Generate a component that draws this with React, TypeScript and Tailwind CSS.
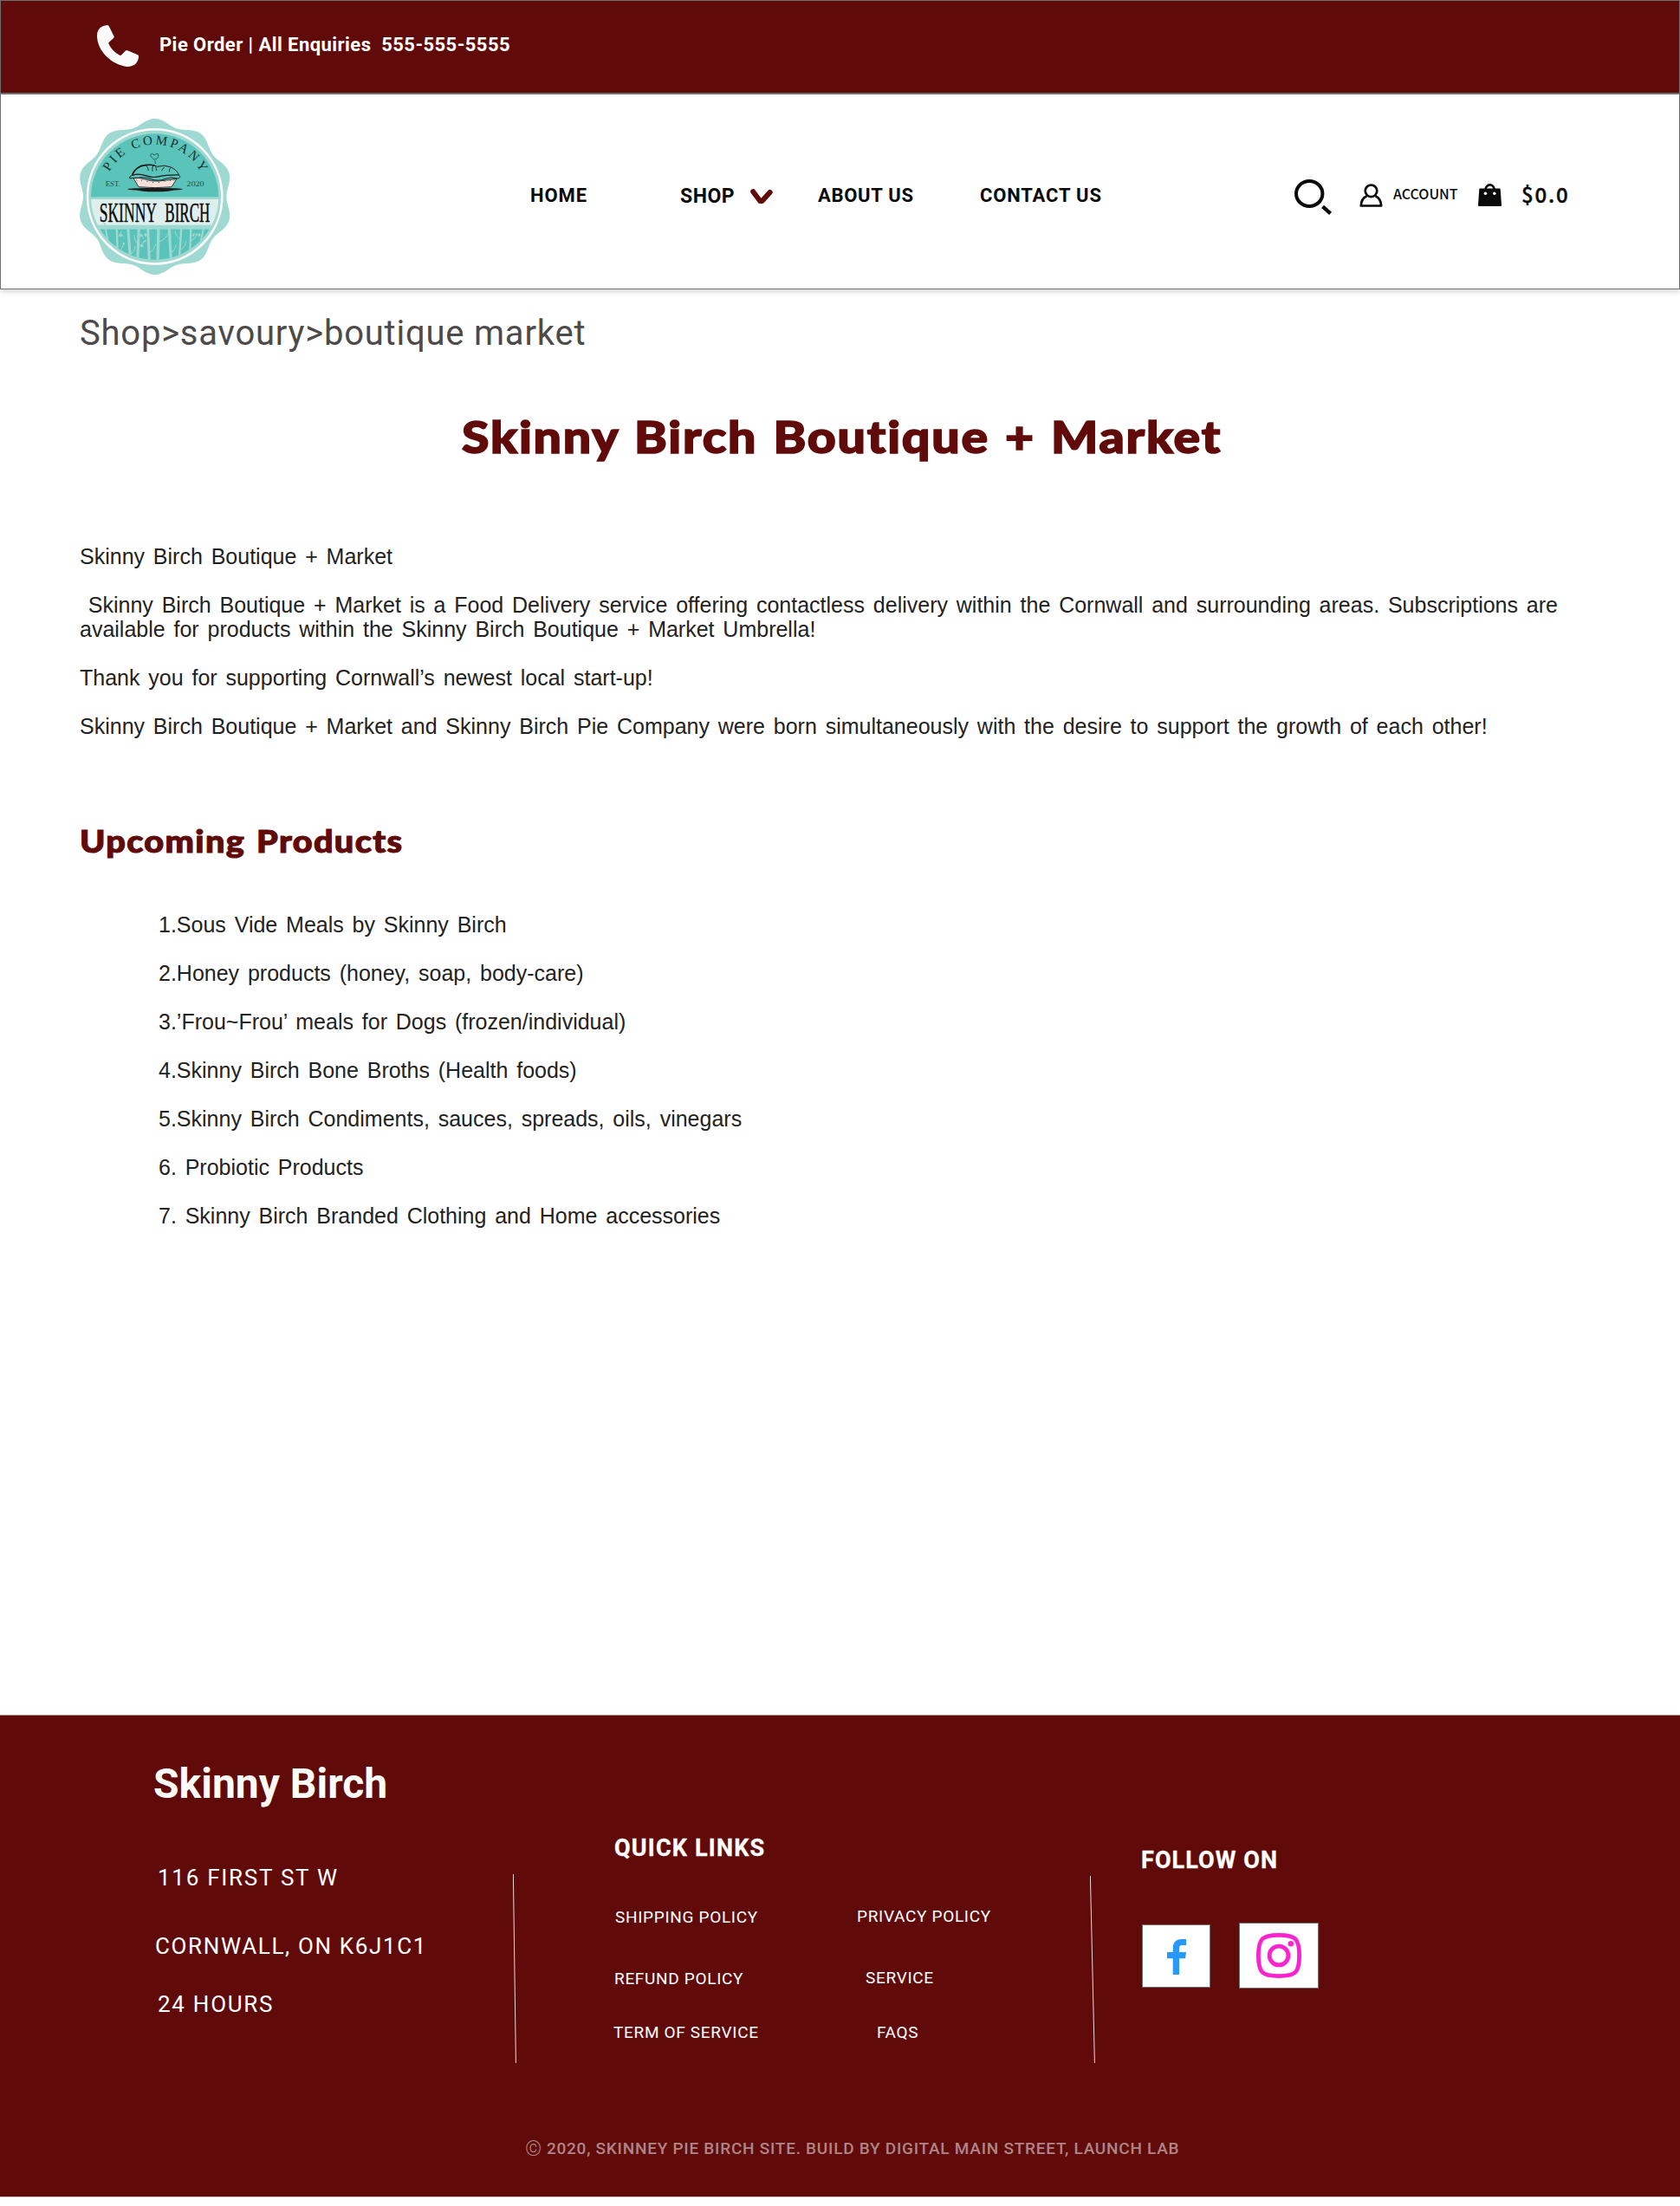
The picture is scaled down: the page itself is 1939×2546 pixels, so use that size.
import React from "react";

const scallop = (() => {
  const pts: string[] = [];
  for (let i = 0; i < 360; i++) {
    const a = (i * Math.PI) / 180;
    const r = 259 + 11 * Math.cos(10 * a);
    pts.push(`${(296 + r * Math.sin(a)).toFixed(1)},${(306 - r * Math.cos(a)).toFixed(1)}`);
  }
  return pts.join(" ");
})();

const trunks = [
  [122, 400, 148, 530, 6],
  [164, 410, 168, 530, 7],
  [203, 410, 212, 530, 9],
  [241, 410, 236, 530, 9],
  [272, 410, 277, 530, 9],
  [309, 410, 306, 530, 10],
  [346, 410, 352, 530, 9],
  [388, 410, 380, 530, 7],
  [421, 410, 417, 530, 7],
  [466, 410, 440, 530, 6],
];

function Logo() {
  return (
    <svg viewBox="36 36 519 540" className="h-[180px] w-[173px] font-['Liberation_Serif'] font-normal" aria-label="Skinny Birch Pie Company">
      <defs>
        <clipPath id="disc">
          <ellipse cx="296" cy="306" rx="221" ry="218" />
        </clipPath>
        <path id="arc" d="M 139 220 A 179 179 0 0 1 464 240" />
      </defs>
      <polygon points={scallop} fill="#a0d9d2" />
      <circle cx="296" cy="305.5" r="233" fill="none" stroke="#fff" strokeWidth="7.5" />
      <g clipPath="url(#disc)">
        <rect x="70" y="80" width="452" height="227" fill="#5ac4bb" />
        <rect x="70" y="315" width="452" height="89" fill="#dfefee" />
        <rect x="70" y="419" width="452" height="110" fill="#5ac4bb" />
        <g stroke="#a0d9d2" fill="none" strokeLinecap="round">
          {trunks.map(([x1, y1, x2, y2, w], i) => (
            <line key={i} x1={x1} y1={y1} x2={x2} y2={y2} strokeWidth={w} />
          ))}
          <g strokeWidth="3">
            <path d="M166 445q10-4 14-18M180 436l8 8M239 470q-14-6-14-30M242 478q14-8 22-22M256 462l10-2M256 450l-6-14M212 505q14-8 16-26" />
            <path d="M309 462q26-6 36-34M279 500q16-12 20-28M388 455q-18-8-22-28M386 488q16-8 18-26M421 460q16-8 22-26M443 438l-14-4M354 500q14-12 16-28M140 480l-14-12M170 496q14-8 18-26" />
          </g>
          <g fill="#a0d9d2" stroke="none">
            <circle cx="178" cy="440" r="5" />
            <circle cx="248" cy="440" r="5" />
            <circle cx="264" cy="438" r="5" />
            <circle cx="251" cy="476" r="5" />
            <circle cx="450" cy="438" r="5" />
            <circle cx="429" cy="440" r="4" />
            <circle cx="188" cy="468" r="4" />
          </g>
        </g>
      </g>
      <text fontSize="45" fill="#16302e" letterSpacing="8.8">
        <textPath href="#arc">PIE COMPANY</textPath>
      </text>
      <text x="125" y="270" fontSize="26" fill="#1f4f4b" textLength="52" lengthAdjust="spacingAndGlyphs">EST.</text>
      <text x="406" y="270" fontSize="26" fill="#1f4f4b" textLength="61" lengthAdjust="spacingAndGlyphs">2020</text>
      <text x="104" y="392" fontSize="97" fill="#0b0b0b" stroke="#0b0b0b" strokeWidth="1.500" textLength="199" lengthAdjust="spacingAndGlyphs">SKINNY</text>
      <text x="331" y="392" fontSize="97" fill="#0b0b0b" stroke="#0b0b0b" strokeWidth="1.500" textLength="156" lengthAdjust="spacingAndGlyphs">BIRCH</text>
      <path d="M298 192q2-12-9-19-10-7-8-13 4-7 14 2 8-8 13-3 4 8-6 16-5 2-6-2" fill="none" stroke="#1d4a47" strokeWidth="2.6" />
      <ellipse cx="297" cy="280" rx="96" ry="4.5" fill="#1b1b1b" />
      <ellipse cx="298" cy="282" rx="62" ry="7" fill="#1b1b1b" />
      <path d="M222 242Q240 238 262 246T310 252T372 244L354 272Q298 278 240 272Z" fill="#f7e0da" stroke="#1b1b1b" strokeWidth="2.5" />
      <path d="M209 243Q206 235 218 232Q226 206 256 198Q290 192 304 202Q330 194 352 204Q374 214 380 232Q388 240 376 243Q350 236 330 245T282 245T238 241Q222 240 209 243Z" fill="#5ac4bb" stroke="#1b1b1b" strokeWidth="3" />
      <path d="M218 232Q240 224 264 233T312 236T380 231" fill="none" stroke="#1b1b1b" strokeWidth="3.5" />
      <path d="M218 230Q232 200 262 197Q280 194 296 198" fill="none" stroke="#1b1b1b" strokeWidth="5" />
      <path d="M266 198q8 8 8 18M290 198q-4 8-2 20M298 202q4 6 4 14M330 204q-8 4-10 12M350 206q-4 6-4 14" fill="none" stroke="#1b1b1b" strokeWidth="2.5" />
      <path d="M232 247l3 3M250 248l1 3M270 252v3M290 255v3M310 255v3M330 251v3M350 248l-1 3M364 247l-2 3" stroke="#1b1b1b" strokeWidth="2.5" />
    </svg>
  );
}

function PhoneIcon() {
  return (
    <svg viewBox="0 0 48 48" className="h-12 w-12" fill="#fafafa">
      <path d="M6 1.5Q9 0 12.2 0Q13.3.2 13.8 1.2L19.6 13Q20 14.2 19 15L13.6 20Q13 20.8 13.4 21.6C16 27 20 31.5 26 34.8Q27.2 35.3 28 34.6L33 29.6Q34 28.8 35.2 29.3L47 34.3Q48 34.9 48 36C48 43 43 48 35 48C17 46 0 30 0 12C0 7 2 3.5 6 1.5Z" />
    </svg>
  );
}

function SearchIcon() {
  return (
    <svg viewBox="0 0 44 42" className="h-[42px] w-11" fill="none" stroke="#0a0a0a" strokeWidth="4">
      <ellipse cx="17.2" cy="16.5" rx="15.2" ry="14.5" />
      <path d="M32.6 31.3L41.6 39.3" strokeWidth="4.4" />
    </svg>
  );
}

function UserIcon() {
  return (
    <svg viewBox="0 0 27 27" className="h-[27px] w-[27px]" fill="none" stroke="#0a0a0a" strokeWidth="2.7">
      <circle cx="13.5" cy="8.3" r="6.8" />
      <path d="M8.5 14.2C4.5 16 1.9 20.5 1.8 25.5H25.2C25 20.5 22.4 16 18.5 14.2" strokeLinejoin="round" />
    </svg>
  );
}

function BagIcon() {
  return (
    <svg viewBox="0 0 27 26" className="h-[26px] w-[27px]">
      <path d="M1.3 6.5Q1.4 5.6 2.4 5.6H24.6Q25.6 5.6 25.7 6.5L27 24.8Q27 26 26 26H1Q0 26 0 24.8Z" fill="#0a0a0a" />
      <path d="M8.4 10.5V7A5.2 5.6 0 0 1 18.8 7V10.5" fill="none" stroke="#0a0a0a" strokeWidth="2.6" />
      <circle cx="8.4" cy="11.3" r="1.8" fill="#fff" />
      <circle cx="18.8" cy="11.3" r="1.8" fill="#fff" />
    </svg>
  );
}

function Chevron() {
  return (
    <svg viewBox="0 0 27 19" className="h-[19px] w-[27px]" fill="none" stroke="#600b0a" strokeLinecap="round" strokeLinejoin="round" strokeWidth="6">
      <path d="M3.2 3.2L11.3 14H13.6L22.6 4" />
    </svg>
  );
}

function Header() {
  return (
    <header className="font-[Roboto]">
      <div className="flex h-[108px] border border-[#707070] bg-[#600b0a] text-white">
        <div className="mt-7 ml-[111px] w-12">
          <PhoneIcon />
        </div>
        <p className="mt-[38px] ml-6 text-[22px] leading-[26px] font-bold tracking-[0.44px] whitespace-pre">
          {"Pie Order | All Enquiries  555-555-5555"}
        </p>
      </div>
      <div className="flex h-[226px] items-start border border-[#707070] bg-white text-[22px] leading-[26px] font-bold whitespace-nowrap text-[#0a0a0a] shadow-[0_3px_6px_rgba(0,0,0,0.16)]">
        <a className="mt-7 ml-[91px] w-[520px]"><Logo /></a>
        <a className="mt-[104px] w-[173px] tracking-[0.9px]">HOME</a>
        <a className="mt-[105px] w-[81px] text-[23px] tracking-[0.5px]">SHOP</a>
        <span className="mt-[109px] w-[78px]"><Chevron /></span>
        <a className="mt-[104px] w-[187px] tracking-[0.7px]">ABOUT US</a>
        <a className="mt-[104px] w-[363px] tracking-[0.83px]">CONTACT US</a>
        <span className="mt-[98px] w-[75px]"><SearchIcon /></span>
        <span className="mt-[103px] w-[39px]"><UserIcon /></span>
        <a className="mt-[102px] w-[98px] font-['Noto_Sans_CJK_JP',sans-serif] text-[16px] leading-[24px] font-medium">ACCOUNT</a>
        <span className="mt-[103px] w-[50px]"><BagIcon /></span>
        <span className="mt-[99px] font-['Noto_Sans_CJK_JP',sans-serif] text-[24px] leading-[32px] font-medium tracking-[1.8px] [-webkit-text-stroke:0.4px]">$0.0</span>
      </div>
    </header>
  );
}

const products = [
  "1.Sous Vide Meals by Skinny Birch",
  "2.Honey products (honey, soap, body-care)",
  "3.’Frou~Frou’ meals for Dogs (frozen/individual)",
  "4.Skinny Birch Bone Broths (Health foods)",
  "5.Skinny Birch Condiments, sauces, spreads, oils, vinegars",
  "6. Probiotic Products",
  "7. Skinny Birch Branded Clothing and Home accessories",
];

function Content() {
  return (
    <main className="h-[1645px] pt-[27px] pl-[92px]">
      <nav className="font-[Roboto] text-[40px] leading-[48px] tracking-[0.78px] text-[#4c4a4a]">
        Shop&gt;savoury&gt;boutique market
      </nav>
      <h1 className="mt-16 ml-[441px] w-[900px] origin-left scale-x-110 font-[Lato] text-[52px] leading-[60px] font-black tracking-[1.62px] [word-spacing:2.5px] whitespace-nowrap text-[#600b0a] [-webkit-text-stroke:1.6px]">
        Skinny Birch Boutique + Market
      </h1>
      <div className="mt-[95px] flex flex-col gap-7 font-['Liberation_Sans'] text-[25px] leading-[28px] [word-spacing:2.88px] whitespace-pre text-[#222]">
        <p>Skinny Birch Boutique + Market</p>
        <p>
          {" Skinny Birch Boutique + Market is a Food Delivery service offering contactless delivery within the Cornwall and surrounding areas. Subscriptions are"}
          <br />
          {"available for products within the Skinny Birch Boutique + Market Umbrella!"}
        </p>
        <p>Thank you for supporting Cornwall’s newest local start-up!</p>
        <p>Skinny Birch Boutique + Market and Skinny Birch Pie Company were born simultaneously with the desire to support the growth of each other!</p>
      </div>
      <h2 className="mt-24 w-[400px] origin-left scale-x-110 font-[Lato] text-[36px] leading-[44px] font-black tracking-[1.22px] [word-spacing:2px] whitespace-nowrap text-[#600b0a] [-webkit-text-stroke:1.1px]">
        Upcoming Products
      </h2>
      <ul className="mt-[61px] ml-[91px] flex flex-col gap-7 font-['Liberation_Sans'] text-[25px] leading-[28px] [word-spacing:2.88px] whitespace-pre text-[#222]">
        {products.map((p) => (
          <li key={p}>{p}</li>
        ))}
      </ul>
    </main>
  );
}

function Footer() {
  return (
    <footer className="h-[557px] border-t border-b border-t-[#a58a8a] border-b-[#cfb5b5] bg-[#600b0a] font-[Roboto] whitespace-nowrap text-white">
      <div className="flex h-[488px] items-start">
        <section className="w-[592px] pt-[51px] pl-[177px] text-[26px] leading-[32px] tracking-[1.73px]">
          <h3 className="text-[48px] leading-[56px] font-bold tracking-normal text-[#fdfbf7]">Skinny Birch</h3>
          <p className="mt-16 ml-[5px]">116 FIRST ST W</p>
          <p className="mt-[47px] ml-[2px] tracking-[1.65px]">CORNWALL, ON K6J1C1</p>
          <p className="mt-[35px] ml-[5px]">24 HOURS</p>
        </section>
        <svg viewBox="0 0 4 218" className="mt-[183px] h-[218px] w-1" stroke="#fff" strokeOpacity="0.85">
          <line x1="0.4" y1="0" x2="3.4" y2="218" />
        </svg>
        <section className="w-[662px] pt-[137px] pl-[112px] text-[19px] leading-[24px] tracking-[0.68px]">
          <h4 className="ml-px text-[27px] leading-[32px] font-bold tracking-[1.2px] [-webkit-text-stroke:0.3px]">QUICK LINKS</h4>
          <div className="mt-[52px] flex">
            <ul className="w-[281px]">
              <li className="ml-[2px]">SHIPPING POLICY</li>
              <li className="mt-[47px] ml-px">REFUND POLICY</li>
              <li className="mt-[38px]">TERM OF SERVICE</li>
            </ul>
            <ul className="-mt-px">
              <li>PRIVACY POLICY</li>
              <li className="mt-[47px] ml-[10px]">SERVICE</li>
              <li className="mt-[39px] ml-[23px]">FAQS</li>
            </ul>
          </div>
        </section>
        <svg viewBox="0 0 6 216" className="mt-[185px] h-[216px] w-1.5" stroke="#fff" strokeOpacity="0.85">
          <line x1="0.4" y1="0" x2="5.4" y2="216" />
        </svg>
        <section className="pt-[151px] pl-[54px]">
          <h4 className="-ml-px text-[27px] leading-[32px] font-bold tracking-[1.08px] [-webkit-text-stroke:0.3px]">FOLLOW ON</h4>
          <div className="mt-14 flex items-start gap-[33px]">
            <a className="mt-[2px] flex h-[73px] w-[79px] justify-center border border-[#707070] bg-white pt-4">
              <svg viewBox="0 0 22 41" className="h-[41px] w-[22px]" fill="#2699fb">
                <path d="M6.7 41V22.3H0V15H6.7V11.2C6.7 4 9.8 0 17 0H22V7H18C14.8 7 14 8.2 14 11V15H22L21 22.3H14V41Z" />
              </svg>
            </a>
            <a className="flex h-[76px] w-[92px] justify-center border border-[#707070] bg-white pt-[11px]">
              <svg viewBox="0 0 52 52" className="h-[52px] w-[52px]" fill="none" stroke="#fb23ce" strokeWidth="4.8">
                <path d="M2.4 26C2.4 6.5 6.5 2.4 26 2.4S49.6 6.5 49.6 26S45.5 49.6 26 49.6S2.4 45.5 2.4 26Z" />
                <circle cx="26" cy="26" r="10.9" />
                <circle cx="39.8" cy="12.3" r="3.3" fill="#fb23ce" stroke="none" />
              </svg>
            </a>
          </div>
        </section>
      </div>
      <p className="flex pl-[606px] text-[19px] leading-[24px] font-medium tracking-[0.74px] text-[#b08585]">
        <span className="w-[25px] text-[24px] font-light tracking-normal">©</span>
        2020, SKINNEY PIE BIRCH SITE. BUILD BY DIGITAL MAIN STREET, LAUNCH LAB
      </p>
    </footer>
  );
}

export default function App() {
  return (
    <div className="h-[2546px] w-[1939px] overflow-hidden bg-white">
      <Header />
      <Content />
      <Footer />
    </div>
  );
}
